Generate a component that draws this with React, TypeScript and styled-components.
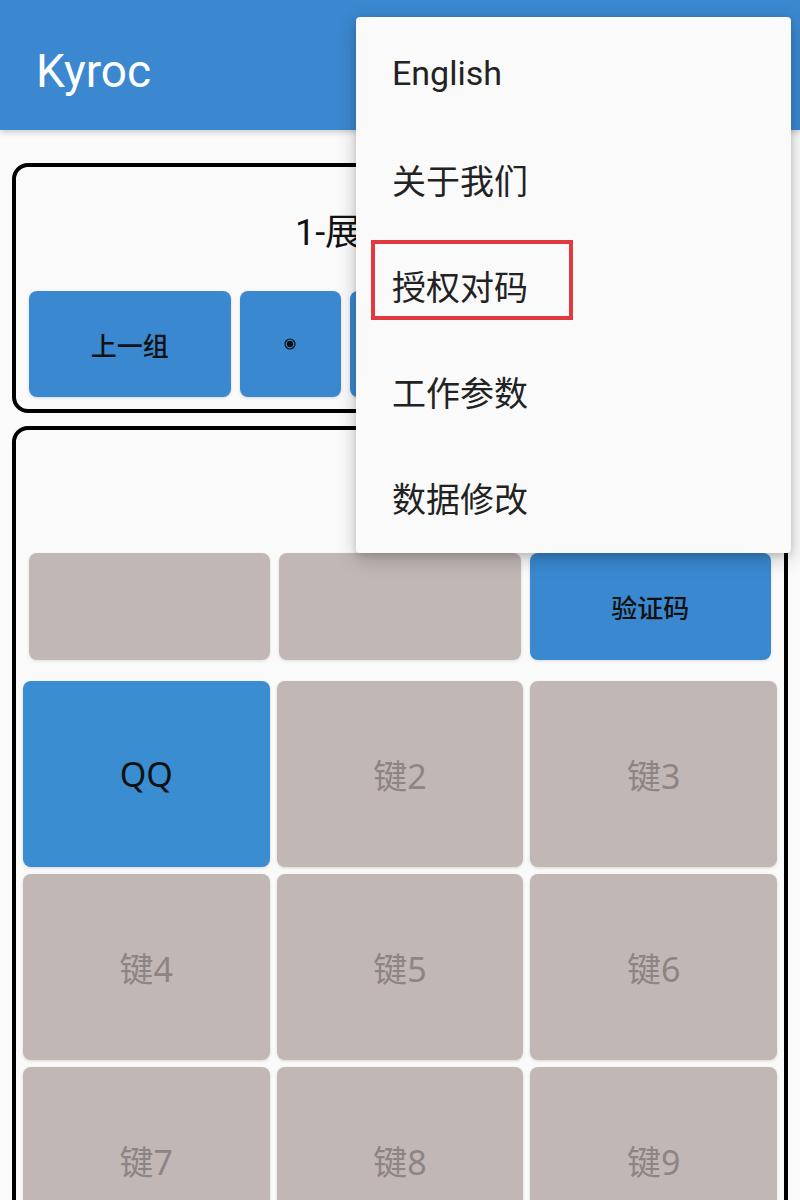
import React from "react";
import styled, { createGlobalStyle } from "styled-components";

const GlobalStyle = createGlobalStyle`
    html, body {
        margin: 0;
        padding: 0;
        background: #fafafa;
        font-family: Roboto, "Noto Sans CJK SC", sans-serif;
    }
`;

const menuItems = ["English", "关于我们", "授权对码", "工作参数", "数据修改"];
const groupButtons = ["上一组", "radio", "radio", "radio", "下一组"];
const keys = ["QQ", "键2", "键3", "键4", "键5", "键6", "键7", "键8", "键9"];

const RadioDot: React.FC = () => (
    <svg width="12" height="12" viewBox="0 0 12 12">
        <circle cx="6" cy="6" r="5" fill="none" stroke="#111" strokeWidth="1.2" />
        <circle cx="6" cy="6" r="3.2" fill="#111" />
    </svg>
);

const App: React.FC = () => {
    return (
        <>
            <GlobalStyle />
            <Screen>
                <AppBar>
                    <AppTitle>Kyroc</AppTitle>
                </AppBar>

                <Content>
                    <Card>
                        <CardTitle>1-展厅设备组</CardTitle>
                        <GroupRow>
                            {groupButtons.map((label, i) => (
                                <GroupButton key={i} wide={label !== "radio"}>
                                    {label === "radio" ? <RadioDot /> : label}
                                </GroupButton>
                            ))}
                        </GroupRow>
                    </Card>

                    <Card>
                        <CardHeader />
                        <ActionRow>
                            <ActionButton active={false} />
                            <ActionButton active={false} />
                            <ActionButton active>验证码</ActionButton>
                        </ActionRow>
                        <KeyGrid>
                            {keys.map((k, i) => (
                                <KeyButton key={k} active={i === 0}>
                                    {k}
                                </KeyButton>
                            ))}
                        </KeyGrid>
                    </Card>
                </Content>

                <Menu>
                    {menuItems.map(item => (
                        <MenuItem key={item}>
                            {item}
                            {item === "授权对码" && <Highlight />}
                        </MenuItem>
                    ))}
                </Menu>
            </Screen>
        </>
    );
};

export default App;

const Screen = styled.div`
    position: relative;
    width: 800px;
    height: 1200px;
    overflow: hidden;
    background: #fafafa;
`;

const AppBar = styled.header`
    height: 130px;
    box-sizing: border-box;
    display: flex;
    align-items: center;
    padding: 12px 0 0 36px;
    background: #3b88d0;
    box-shadow: 0 2px 6px rgba(0, 0, 0, 0.2);
    position: relative;
    z-index: 1;
`;

const AppTitle = styled.h1`
    margin: 0;
    color: #fff;
    font-size: 46px;
    font-weight: 400;
    font-family: Roboto, sans-serif;
`;

const Content = styled.main`
    display: flex;
    flex-direction: column;
    gap: 13px;
    padding: 33px 12px 0;
`;

const Card = styled.section`
    border: 4px solid #000;
    border-radius: 16px;
    padding: 0 0 12px;
    background: #fafafa;
`;

const CardTitle = styled.div`
    height: 124px;
    display: flex;
    align-items: center;
    justify-content: center;
    font-size: 36px;
    color: #111;
    font-family: Roboto, "Noto Sans CJK SC", sans-serif;
`;

const CardHeader = styled.div`
    height: 123px;
`;

const GroupRow = styled.div`
    display: flex;
    gap: 9px;
    padding: 0 13px;
`;

const GroupButton = styled.div<{ wide: boolean }>`
    flex: ${({ wide }) => (wide ? 2 : 1)};
    height: 106px;
    display: flex;
    align-items: center;
    justify-content: center;
    border-radius: 8px;
    background: #3a89d0;
    color: #111;
    font-size: 26px;
    font-weight: 500;
    font-family: "Noto Sans CJK SC", sans-serif;
    box-shadow: 0 1px 3px rgba(0, 0, 0, 0.15);
`;

const ActionRow = styled.div`
    display: grid;
    grid-template-columns: repeat(3, 1fr);
    gap: 9px;
    padding: 0 13px;
`;

const ActionButton = styled.div<{ active: boolean }>`
    height: 107px;
    display: flex;
    align-items: center;
    justify-content: center;
    border-radius: 8px;
    background: ${({ active }) => (active ? "#3a89d0" : "#c1b8b6")};
    color: #111;
    font-size: 26px;
    font-weight: 500;
    font-family: "Noto Sans CJK SC", sans-serif;
    box-shadow: 0 1px 3px rgba(0, 0, 0, 0.12);
`;

const KeyGrid = styled.div`
    display: grid;
    grid-template-columns: repeat(3, 1fr);
    grid-auto-rows: 186px;
    gap: 7px;
    padding: 21px 7px 0;
`;

const KeyButton = styled.div<{ active: boolean }>`
    display: flex;
    align-items: center;
    justify-content: center;
    border-radius: 8px;
    background: ${({ active }) => (active ? "#3a8dd0" : "#c1b8b6")};
    color: ${({ active }) => (active ? "#111" : "#8d8583")};
    font-size: 34px;
    font-family: "Noto Sans", "Noto Sans CJK SC", sans-serif;
    box-shadow: 0 1px 3px rgba(0, 0, 0, 0.15);
`;

const Menu = styled.nav`
    position: absolute;
    top: 17px;
    left: 356px;
    width: 435px;
    padding: 3px 0;
    background: #fafafa;
    border-radius: 4px;
    box-shadow: 0 6px 20px rgba(0, 0, 0, 0.22), 0 2px 6px rgba(0, 0, 0, 0.12);
    z-index: 2;
`;

const MenuItem = styled.div`
    position: relative;
    height: 106px;
    display: flex;
    align-items: center;
    padding-left: 36px;
    font-size: 34px;
    color: #222;
    font-family: Roboto, "Noto Sans CJK SC", sans-serif;
`;

const Highlight = styled.span`
    position: absolute;
    left: 15px;
    top: 8px;
    width: 202px;
    height: 80px;
    box-sizing: border-box;
    border: 4px solid #e03a3e;
`;
